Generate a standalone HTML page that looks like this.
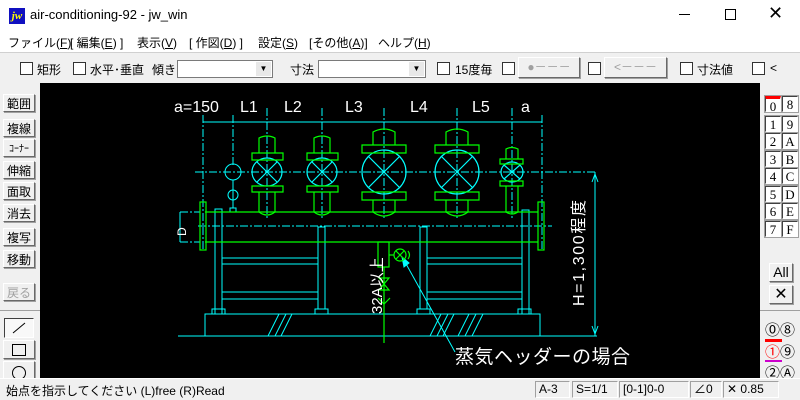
<!DOCTYPE html>
<html><head><meta charset="utf-8"><style>
*{margin:0;padding:0;box-sizing:border-box}
body{width:800px;height:400px;overflow:hidden;background:#f0f0f0;position:relative;font-family:"Liberation Sans","Noto Sans CJK JP",sans-serif;font-size:12px;color:#000}
.a{position:absolute;white-space:nowrap}
.cb{position:absolute;width:13px;height:13px;border:1px solid #333;background:#fff}
.btn{position:absolute;background:#f0f0f0;border:1px solid;border-color:#fff #696969 #696969 #fff;box-shadow:1px 1px 0 #a0a0a0;text-align:center;font-size:12px}
.lb{position:absolute;width:16px;height:16px;background:#fff;border:1px solid;border-color:#404040 #fff #fff #404040;outline:1px solid #a0a0a0;text-align:center;font-family:"Liberation Serif",serif;font-size:13px;line-height:15px}
.st{position:absolute;top:381px;height:17px;border:1px solid;border-color:#a0a0a0 #fff #fff #a0a0a0;font-size:12px;line-height:15px;padding-left:3px}
</style></head><body>
<div class="a" style="left:0;top:0;width:800px;height:52px;background:#fff"></div>
<div class="a" style="left:9px;top:8px;width:16px;height:16px;background:#1010c0;color:#ff0;font:bold italic 11px 'Liberation Serif',serif;line-height:16px;text-align:center">jw</div>
<div class="a" style="left:30px;top:7px;font-size:13px">air-conditioning-92 - jw_win</div>
<div class="a" style="left:679px;top:14px;width:11px;height:1px;background:#000"></div>
<div class="a" style="left:725px;top:9px;width:11px;height:11px;border:1px solid #000"></div>
<div class="a" style="left:768px;top:3px;font-size:18px;font-weight:lighter">✕</div>
<div class="a" style="left:8px;top:34px">ファイル(<u>F</u>)</div>
<div class="a" style="left:70px;top:34px">[ 編集(<u>E</u>) ]</div>
<div class="a" style="left:137px;top:34px">表示(<u>V</u>)</div>
<div class="a" style="left:189px;top:34px">[ 作図(<u>D</u>) ]</div>
<div class="a" style="left:258px;top:34px">設定(<u>S</u>)</div>
<div class="a" style="left:309px;top:34px">[その他(<u>A</u>)]</div>
<div class="a" style="left:378px;top:34px">ヘルプ(<u>H</u>)</div>
<div class="a" style="left:0;top:52px;width:800px;height:1px;background:#d0d0d0"></div>
<div class="cb" style="left:20px;top:62px"></div><div class="a" style="left:37px;top:61px">矩形</div>
<div class="cb" style="left:73px;top:62px"></div><div class="a" style="left:90px;top:61px">水平･垂直</div>
<div class="a" style="left:152px;top:61px">傾き</div>
<div class="a" style="left:177px;top:60px;width:96px;height:18px;background:#fff;border:1px solid #7a7a7a"><div class="a" style="right:1px;top:1px;width:15px;height:14px;background:#e8e8e8;font-size:8px;text-align:center;line-height:14px">▼</div></div>
<div class="a" style="left:290px;top:61px">寸法</div>
<div class="a" style="left:318px;top:60px;width:108px;height:18px;background:#fff;border:1px solid #7a7a7a"><div class="a" style="right:1px;top:1px;width:15px;height:14px;background:#e8e8e8;font-size:8px;text-align:center;line-height:14px">▼</div></div>
<div class="cb" style="left:437px;top:62px"></div><div class="a" style="left:455px;top:61px">15度毎</div>
<div class="cb" style="left:502px;top:62px"></div>
<div class="btn" style="left:518px;top:57px;width:62px;height:21px;color:#a0a0a0;line-height:19px">●－－－</div>
<div class="cb" style="left:588px;top:62px"></div>
<div class="btn" style="left:604px;top:57px;width:63px;height:21px;color:#a0a0a0;line-height:19px">&lt;－－－</div>
<div class="cb" style="left:680px;top:62px"></div><div class="a" style="left:697px;top:61px">寸法値</div>
<div class="cb" style="left:752px;top:62px"></div><div class="a" style="left:770px;top:61px">&lt;</div>
<div class="a" style="left:40px;top:83px;width:720px;height:295px;background:#000"></div>
<div class="btn" style="left:3px;top:94px;width:32px;height:18px">範囲</div>
<div class="btn" style="left:3px;top:119px;width:32px;height:18px">複線</div>
<div class="btn" style="left:3px;top:139px;width:32px;height:18px;font-size:10px">ｺｰﾅｰ</div>
<div class="btn" style="left:3px;top:161px;width:32px;height:18px">伸縮</div>
<div class="btn" style="left:3px;top:182px;width:32px;height:18px">面取</div>
<div class="btn" style="left:3px;top:204px;width:32px;height:18px">消去</div>
<div class="btn" style="left:3px;top:228px;width:32px;height:18px">複写</div>
<div class="btn" style="left:3px;top:250px;width:32px;height:18px">移動</div>
<div class="btn" style="left:3px;top:283px;width:32px;height:18px;color:#a0a0a0">戻る</div>
<div class="a" style="left:0;top:310px;width:40px;height:1px;background:#a0a0a0"></div>
<div class="a" style="left:4px;top:318px;width:30px;height:20px;background:#f8f8f8;border:1px solid;border-color:#404040 #fff #fff #404040"><svg width="28" height="18"><line x1="8" y1="14" x2="20" y2="4" stroke="#000"/></svg></div>
<div class="btn" style="left:3px;top:340px;width:32px;height:19px"><div style="margin:3px auto;width:14px;height:12px;border:1px solid #000"></div></div>
<div class="btn" style="left:3px;top:361px;width:32px;height:18px;overflow:hidden"><div style="margin:4px auto;width:14px;height:14px;border:1px solid #000;border-radius:50%"></div></div>
<div class="a" style="left:760px;top:83px;width:40px;height:295px;background:#f0f0f0"></div>
<div class="lb" style="left:765px;top:96px;border-top:3px solid red">0</div><div class="lb" style="left:782px;top:96px">8</div>
<div class="lb" style="left:765px;top:116px">1</div><div class="lb" style="left:782px;top:116px">9</div>
<div class="lb" style="left:765px;top:133px">2</div><div class="lb" style="left:782px;top:133px">A</div>
<div class="lb" style="left:765px;top:151px">3</div><div class="lb" style="left:782px;top:151px">B</div>
<div class="lb" style="left:765px;top:168px">4</div><div class="lb" style="left:782px;top:168px">C</div>
<div class="lb" style="left:765px;top:186px">5</div><div class="lb" style="left:782px;top:186px">D</div>
<div class="lb" style="left:765px;top:203px">6</div><div class="lb" style="left:782px;top:203px">E</div>
<div class="lb" style="left:765px;top:221px">7</div><div class="lb" style="left:782px;top:221px">F</div>
<div class="btn" style="left:769px;top:263px;width:24px;height:19px;font-size:14px;line-height:17px">All</div>
<div class="btn" style="left:769px;top:285px;width:24px;height:19px;font-size:16px;line-height:17px">✕</div>
<div class="a" style="left:760px;top:310px;width:40px;height:1px;background:#a0a0a0"></div>
<div class="a" style="left:765px;top:319px;font-size:15px">⓪⑧</div>
<div class="a" style="left:765px;top:339px;width:17px;height:3px;background:red"></div>
<div class="a" style="left:765px;top:341px;font-size:15px"><span style="color:red">①</span>⑨</div>
<div class="a" style="left:765px;top:360px;width:17px;height:2px;background:#c0c"></div>
<div class="a" style="left:765px;top:362px;font-size:15px;height:16px;overflow:hidden">②Ⓐ</div>
<div class="a" style="left:0;top:378px;width:800px;height:22px;background:#f0f0f0;border-top:1px solid #fff"></div>
<div class="a" style="left:6px;top:382px">始点を指示してください (L)free (R)Read</div>
<div class="st" style="left:535px;width:35px">A-3</div>
<div class="st" style="left:572px;width:46px">S=1/1</div>
<div class="st" style="left:619px;width:70px">[0-1]0-0</div>
<div class="st" style="left:690px;width:32px">∠0</div>
<div class="st" style="left:723px;width:56px">✕ 0.85</div>
<svg class="a" style="left:0;top:0" width="800" height="400" font-family="Liberation Sans,Noto Sans CJK JP,sans-serif">
<g stroke="#0ff" stroke-width="1" fill="none">
<line x1="203" y1="122" x2="542" y2="122"/>
<g stroke-dasharray="8,2,2,2">
<line x1="203" y1="115" x2="203" y2="250"/><line x1="233" y1="115" x2="233" y2="165"/>
<line x1="267" y1="108" x2="267" y2="218"/><line x1="322" y1="108" x2="322" y2="218"/>
<line x1="384" y1="108" x2="384" y2="218"/><line x1="457" y1="108" x2="457" y2="218"/>
<line x1="512" y1="108" x2="512" y2="218"/><line x1="542" y1="115" x2="542" y2="250"/>
<line x1="195" y1="172" x2="597" y2="172"/><line x1="198" y1="226" x2="552" y2="226"/>
<line x1="180" y1="212" x2="200" y2="212"/><line x1="180" y1="242" x2="200" y2="242"/>
</g>
<line x1="180" y1="212" x2="180" y2="242"/>
<circle cx="233" cy="172" r="8"/><ellipse cx="233" cy="195" rx="5" ry="5"/><line x1="233" y1="180" x2="233" y2="208"/><rect x="230" y="208" width="6" height="4"/>
<path d="M215 314V209h7v105M318 309V227h7v82M420 309V227h7v82M522 314V210h7v104"/>
<path d="M212 309h13v5h-13zM315 309h13v5h-13zM417 309h13v5h-13zM518 309h13v5h-13z"/>
<path d="M222 258h96M222 264h96M222 292h96M222 299h96M427 258h95M427 264h95M427 292h95M427 299h95"/>
<rect x="205" y="314" width="335" height="22"/><line x1="178" y1="336" x2="597" y2="336"/>
<path d="M268 336l11-22M275 336l11-22M281 336l11-22M430 336l11-22M437 336l11-22M443 336l11-22M458 336l11-22M465 336l11-22M472 336l11-22"/>
<line x1="595" y1="172" x2="595" y2="336"/><path d="M592 182l3-8 3 8M592 326l3 8 3-8"/>
<line x1="405" y1="262" x2="455" y2="352"/><path d="M402 257l2 10 5-4z" fill="#0ff"/>
<g stroke-width="1.2">
<path d="M257 162l20 20M277 162l-20 20" /><ellipse cx="267" cy="172" rx="15" ry="14"/>
<ellipse cx="322" cy="172" rx="15" ry="14"/><path d="M312 162l20 20M332 162l-20 20"/>
<ellipse cx="384" cy="172" rx="22" ry="22"/><path d="M368 156l32 32M400 156l-32 32"/>
<ellipse cx="457" cy="172" rx="22" ry="22"/><path d="M441 156l32 32M473 156l-32 32"/>
<ellipse cx="512" cy="172" rx="11" ry="10"/><path d="M504 165l16 14M520 165l-16 14"/>
</g></g>
<g stroke="#0f0" stroke-width="1.2" fill="none">
<path d="M259 153v-15q8-4 16 0v15M259 192v20q8 6 16 0v-20M252 153h31v7h-31zM252 186h31v6h-31z"/>
<path d="M314 153v-15q8-4 16 0v15M314 192v20q8 6 16 0v-20M307 153h31v7h-31zM307 186h31v6h-31z"/>
<path d="M373 145v-13q11-6 22 0v13M373 200v12q11 8 22 0v-12M362 145h44v8h-44zM362 192h44v8h-44z"/>
<path d="M446 145v-13q11-6 22 0v13M446 200v12q11 8 22 0v-12M435 145h44v8h-44zM435 192h44v8h-44z"/>
<path d="M506 159v-10q6-3 12 0v10M506 186v26q6 4 12 0v-26M500 159h23v5h-23zM500 181h23v5h-23z"/>
<path d="M205 212h333M205 242h333"/><rect x="200" y="202" width="6" height="48"/><rect x="538" y="202" width="6" height="48"/>
<rect x="378" y="242" width="11" height="25"/><line x1="384" y1="267" x2="384" y2="343"/>
<path d="M379 278h10l-10 12h10z"/><path d="M378 298l6 6 6-6"/>
<path d="M389 255h5"/><circle cx="400" cy="255" r="6"/><path d="M396 251l8 8M404 251l-8 8M408 251q3 4 0 8"/>
</g>
<g fill="#fff" font-size="16">
<text x="174" y="112">a=150</text><text x="240" y="112">L1</text><text x="284" y="112">L2</text><text x="345" y="112">L3</text><text x="410" y="112">L4</text><text x="472" y="112">L5</text><text x="521" y="112">a</text>
<text x="455" y="363" font-size="19" textLength="175">蒸気ヘッダーの場合</text>
<text transform="translate(382,314) rotate(-90)" font-size="15">32A以上</text>
<text transform="translate(584,306) rotate(-90)" font-size="16" textLength="106">H=1,300程度</text>
<text transform="translate(186,236) rotate(-90)" font-size="12">D</text>
</g>
</svg>
</body></html>
